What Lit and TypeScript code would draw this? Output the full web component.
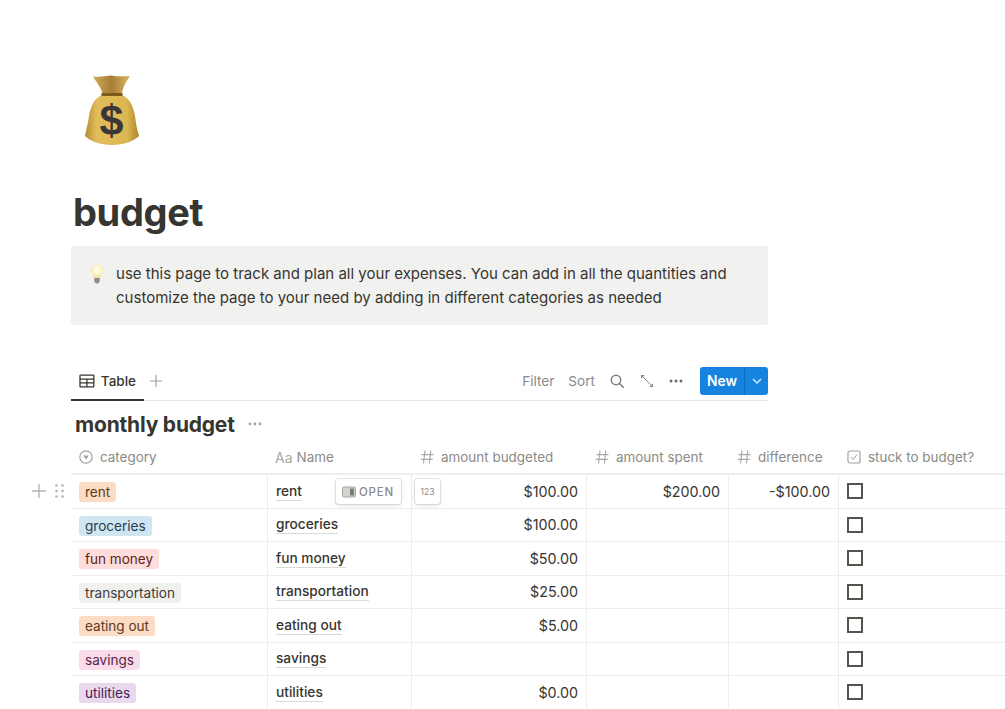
import { LitElement, html, css } from "lit";
import { customElement } from "lit/decorators.js";

const rows = [
  { tag: "rent", cls: "orange", budget: "$100.00", spent: "$200.00", diff: "-$100.00", hover: true },
  { tag: "groceries", cls: "blue", budget: "$100.00" },
  { tag: "fun money", cls: "red", budget: "$50.00" },
  { tag: "transportation", cls: "gray", budget: "$25.00" },
  { tag: "eating out", cls: "orange", budget: "$5.00" },
  { tag: "savings", cls: "pink", budget: "" },
  { tag: "utilities", cls: "purple", budget: "$0.00" },
] as { tag: string; cls: string; budget: string; spent?: string; diff?: string; hover?: boolean }[];

const hash = html`<svg class="hash" viewBox="0 0 14 14" width="14" height="14"><path d="M5 .5 3.500 13.500M10.800 .5 9.300 13.500M1.500 4.600h12M.8 9.400h12" fill="none" stroke="#a9a8a4" stroke-width="1.150"/></svg>`;

const bag = html`<svg viewBox="0 0 56 72" width="56" height="72">
  <defs>
    <linearGradient id="b" x1="0" x2="1" y1="0" y2="0"><stop offset="0" stop-color="#b48c30"/><stop offset=".22" stop-color="#e2bd5c"/><stop offset=".78" stop-color="#dcb650"/><stop offset="1" stop-color="#ab8429"/></linearGradient>
    <linearGradient id="n" x1="0" x2="1" y1="0" y2="0"><stop offset="0" stop-color="#d0ab5c"/><stop offset=".5" stop-color="#a67e34"/><stop offset="1" stop-color="#dbb869"/></linearGradient>
  </defs>
  <path d="M9 2.500c6 .5 12 0 18-1 6 1 13 1 19 .5-3 5-7 10-8 17.500H18.500C17 13 12 8 9 2.500Z" fill="url(#n)"/>
  <path d="M18.500 21 C10 24 7 32 5 42 C4 50 2 56 1 62 C6 67 16 71 28 71 C40 71 50 67 55 62 C53 56 52 50 51 42 C49 32 46 24 37.500 21 Z" fill="url(#b)"/>
  <path d="M18 19h20c1 0 1 3 0 3H18c-1 0-1-3 0-3Z" fill="#7d5b1f"/>
  <text x="27.500" y="61" text-anchor="middle" font-family="Liberation Sans, sans-serif" font-weight="700" font-size="43" fill="#3a3638">$</text>
</svg>`;

const bulb = html`<svg viewBox="0 0 14 20" width="14" height="20">
  <defs><radialGradient id="g" cx=".5" cy=".4" r=".6"><stop offset="0" stop-color="#fffef2"/><stop offset=".6" stop-color="#fdf3c4"/><stop offset="1" stop-color="#f5dc8c"/></radialGradient></defs>
  <path d="M7 .5C3.300.5 1 3 1 6c0 3 2.500 4.500 3 8h6c.5-3.500 3-5 3-8 0-3-2.300-5.500-6-5.500Z" fill="url(#g)"/>
  <path d="M4.300 14h5.400v3.500L8 19.500H6L4.300 17.500Z" fill="#8d8d8f"/>
</svg>`;

@customElement("app-root")
export class AppRoot extends LitElement {
  static styles = css`
    :host { display: block; height: 709px; overflow: hidden; background: #fff; font-family: Inter, "Noto Sans", sans-serif; color: #37352f; -webkit-font-smoothing: antialiased; }
    .page { padding: 74px 0 0 71px; width: 934px; position: relative; }
    .icon { height: 72px; margin-left: 13px; }
    h1 { margin: 43px 0 0 2px; font-size: 38px; line-height: 46px; font-weight: 700; letter-spacing: -.35px; color: #37352f; }
    .callout { width: 697px; height: 79px; box-sizing: border-box; margin-top: 11px; background: #f1f1ef; border-radius: 3px; display: flex; padding: 16px 0 0 19px; }
    .callout .b { flex: none; width: 14px; height: 20px; margin: 2px 12px 0 0; }
    .callout p { margin: 0; font-size: 15.030px; line-height: 23.500px; width: 650px; }
    .tabs { width: 697px; height: 35px; box-sizing: border-box; margin-top: 41px; padding-bottom: 4px; display: flex; align-items: center; border-bottom: 1px solid #e9e9e7; position: relative; font-size: 13.500px; }
    .tab { display: flex; align-items: center; gap: 6px; padding: 0 8px; box-sizing: border-box; font-weight: 500; width: 73px; }
    .tab::after { content: ""; position: absolute; left: 0; bottom: -1px; width: 73px; height: 2px; background: #37352f; }
    .plus { margin-left: 5px; display: flex; }
    .spacer { flex: 1; }
    .act { color: #8b8a86; margin-right: 14px; font-size: 13.600px; }
    .act.sort { margin-right: 15px; }
    .ic { display: flex; }
    .ic-s { margin-right: 15px; }
    .ic-m { margin-right: 17px; }
    .new { display: flex; width: 68px; height: 28px; background: #1783e0; border-radius: 3px; color: #fff; font-weight: 600; font-size: 13.800px; align-items: center; }
    .new span { width: 44px; text-align: center; }
    .new i { width: 24px; height: 28px; border-left: 1px solid #0f6cbd; box-sizing: border-box; display: flex; align-items: center; justify-content: center; }
    .title { display: flex; align-items: center; height: 36px; margin: 5px 0 1px 4px; font-size: 21px; font-weight: 700; letter-spacing: -.2px; gap: 13px; }
    .head, .row { display: flex; width: 934px; position: relative; box-sizing: border-box; }
    .head { height: 32px; padding-bottom: 3px; border-bottom: 2px solid #efefed; color: #8b8a86; font-size: 13.450px; }
    .row { height: 33.500px; border-bottom: 1px solid #ededeb; font-size: 14.300px; }
    .c { box-sizing: border-box; flex: none; display: flex; align-items: center; }
    .c0 { width: 196px; padding-left: 8px; }
    .c1 { width: 144px; padding-left: 8px; }
    .c2 { width: 175px; padding-right: 8px; justify-content: flex-end; }
    .c3 { width: 142px; padding-right: 8px; justify-content: flex-end; }
    .c4 { width: 110px; padding-right: 8px; justify-content: flex-end; }
    .c5 { width: 167px; padding-left: 8px; }
    .row .c0 { padding-top: 2px; }
    .row .c1 { padding-top: 1px; }
    .row .c1, .row .c2, .row .c3, .row .c4, .row .c5 { border-left: 1px solid #ededeb; }
    .head .c { gap: 7px; justify-content: flex-start; padding-right: 0; }
    .head .c1 { gap: 4px; }
    .head .c2, .head .c3, .head .c4 { padding-left: 9px; }
    .head .c5 { padding-left: 9px; }
    .pill { height: 20px; line-height: 20px; padding: 0 6px; border-radius: 3px; font-size: 13.550px; white-space: nowrap; }
    .orange { background: #fcdcc5; color: #5c3a1f; }
    .blue { background: #cfe5f0; color: #1f3f52; }
    .red { background: #fddddb; color: #5e2320; }
    .gray { background: #f0f0ee; color: #3e3d39; }
    .pink { background: #f9dcea; color: #5c2248; }
    .purple { background: #e9d8ee; color: #452059; }
    .name { font-weight: 500; font-size: 13.700px; border-bottom: 1px solid #d9d9d6; line-height: 17px; }
    .box { width: 16px; height: 16px; border: 2px solid #55534e; box-sizing: border-box; }
    .handles { position: absolute; left: -39px; top: 9px; display: flex; gap: 9px; align-items: center; }
    .open { position: absolute; left: 264.500px; top: 4px; width: 65px; height: 25px; box-sizing: border-box; background: #fff; border-radius: 3px; box-shadow: 0 0 0 1px rgba(15,15,15,.1), 0 2px 4px rgba(15,15,15,.1); display: flex; align-items: center; gap: 3px; justify-content: center; font-size: 11.500px; font-weight: 500; letter-spacing: .8px; color: #8b8a86; }
    .n123 { position: absolute; left: 344px; top: 4px; width: 25px; height: 25px; background: #fff; border-radius: 3px; box-shadow: 0 0 0 1px rgba(15,15,15,.1), 0 2px 4px rgba(15,15,15,.1); display: flex; align-items: center; justify-content: center; font-size: 8.500px; color: #8b8a86; }
    .aa { font-size: 14px; color: #a9a8a4; margin-top: 2px; }
  `;

  render() {
    return html`<div class="page">
      <div class="icon">${bag}</div>
      <h1>budget</h1>
      <div class="callout"><div class="b">${bulb}</div><p>use this page to track and plan all your expenses. You can add in all the quantities and customize the page to your need by adding in different categories as needed</p></div>
      <div class="tabs">
        <div class="tab">
          <svg viewBox="0 0 16 14" width="16" height="14"><path d="M1.800 1h12.400c.5 0 .8.300.8.800v10.400c0 .5-.3.800-.8.800H1.800c-.5 0-.8-.3-.8-.8V1.800c0-.5.300-.8.800-.8ZM1 5h14M1 9h14M8 5v8" fill="none" stroke="#37352f" stroke-width="1.300"/></svg>
          Table
        </div>
        <div class="plus"><svg viewBox="0 0 14 14" width="14" height="14"><path d="M7 1v12M1 7h12" stroke="#a3a29e" stroke-width="1.200"/></svg></div>
        <div class="spacer"></div>
        <span class="act">Filter</span><span class="act sort">Sort</span>
        <span class="ic ic-s"><svg viewBox="0 0 15 15" width="15" height="15"><circle cx="6" cy="6" r="4.700" fill="none" stroke="#7d7c78" stroke-width="1.500"/><path d="m9.500 9.500 4.300 4.300" stroke="#7d7c78" stroke-width="1.600"/></svg></span>
        <span class="ic ic-s"><svg viewBox="0 0 14 14" width="14" height="14"><path d="M1 1h3.800L1 4.800ZM13 13H9.200L13 9.200Z" fill="#8b8a86"/><path d="m3 3 8 8" stroke="#8b8a86" stroke-width="1"/></svg></span>
        <span class="ic ic-m"><svg viewBox="0 0 14 4" width="14" height="4"><circle cx="2" cy="2" r="1.500" fill="#6f6e6a"/><circle cx="7" cy="2" r="1.500" fill="#6f6e6a"/><circle cx="12" cy="2" r="1.500" fill="#6f6e6a"/></svg></span>
        <div class="new"><span>New</span><i><svg viewBox="0 0 10 6" width="10" height="6"><path d="m1 1 4 4 4-4" fill="none" stroke="#cfe5fb" stroke-width="1.500"/></svg></i></div>
      </div>
      <div class="title">monthly budget <svg viewBox="0 0 14 4" width="14" height="4"><circle cx="2" cy="2" r="1.400" fill="#a3a29e"/><circle cx="7" cy="2" r="1.400" fill="#a3a29e"/><circle cx="12" cy="2" r="1.400" fill="#a3a29e"/></svg></div>
      <div class="head">
        <div class="c c0"><svg viewBox="0 0 14 14" width="14" height="14"><circle cx="7" cy="7" r="6.200" fill="none" stroke="#a3a29e" stroke-width="1.200"/><path d="M4.200 5.500h5.600L7 9.500Z" fill="#a3a29e"/></svg>category</div>
        <div class="c c1"><span class="aa">Aa</span>Name</div>
        <div class="c c2">${hash}amount budgeted</div>
        <div class="c c3">${hash}amount spent</div>
        <div class="c c4">${hash}difference</div>
        <div class="c c5"><svg viewBox="0 0 14 14" width="14" height="14"><rect x="1" y="1" width="12" height="12" rx="2" fill="none" stroke="#a3a29e" stroke-width="1.200"/><path d="m4 7 2.200 2.500L10 4.500" fill="none" stroke="#a3a29e" stroke-width="1"/></svg>stuck to budget?</div>
      </div>
      ${rows.map((r) => html`<div class="row">
        <div class="c c0"><span class="pill ${r.cls}">${r.tag}</span></div>
        <div class="c c1"><span class="name">${r.tag}</span></div>
        <div class="c c2">${r.budget}</div>
        <div class="c c3">${r.spent ?? ""}</div>
        <div class="c c4">${r.diff ?? ""}</div>
        <div class="c c5"><div class="box"></div></div>
        ${r.hover ? html`
          <div class="handles">
            <svg viewBox="0 0 14 14" width="14" height="14"><path d="M7 0v14M0 7h14" stroke="#b3b2ae" stroke-width="1.300"/></svg>
            <svg viewBox="0 0 9 14" width="9" height="14"><g fill="#b3b2ae"><circle cx="1.500" cy="1.500" r="1.300"/><circle cx="7.500" cy="1.500" r="1.300"/><circle cx="1.500" cy="7" r="1.300"/><circle cx="7.500" cy="7" r="1.300"/><circle cx="1.500" cy="12.500" r="1.300"/><circle cx="7.500" cy="12.500" r="1.300"/></g></svg>
          </div>
          <div class="open"><svg viewBox="0 0 14 12" width="14" height="12"><rect x=".5" y="1" width="13" height="10" rx="1.500" fill="#d5d4d1" stroke="#a3a29e"/><rect x="8" y="2.500" width="4" height="7" fill="#7d7c78"/></svg>OPEN</div>
          <div class="n123">123</div>` : ""}
      </div>`)}
    </div>`;
  }
}
